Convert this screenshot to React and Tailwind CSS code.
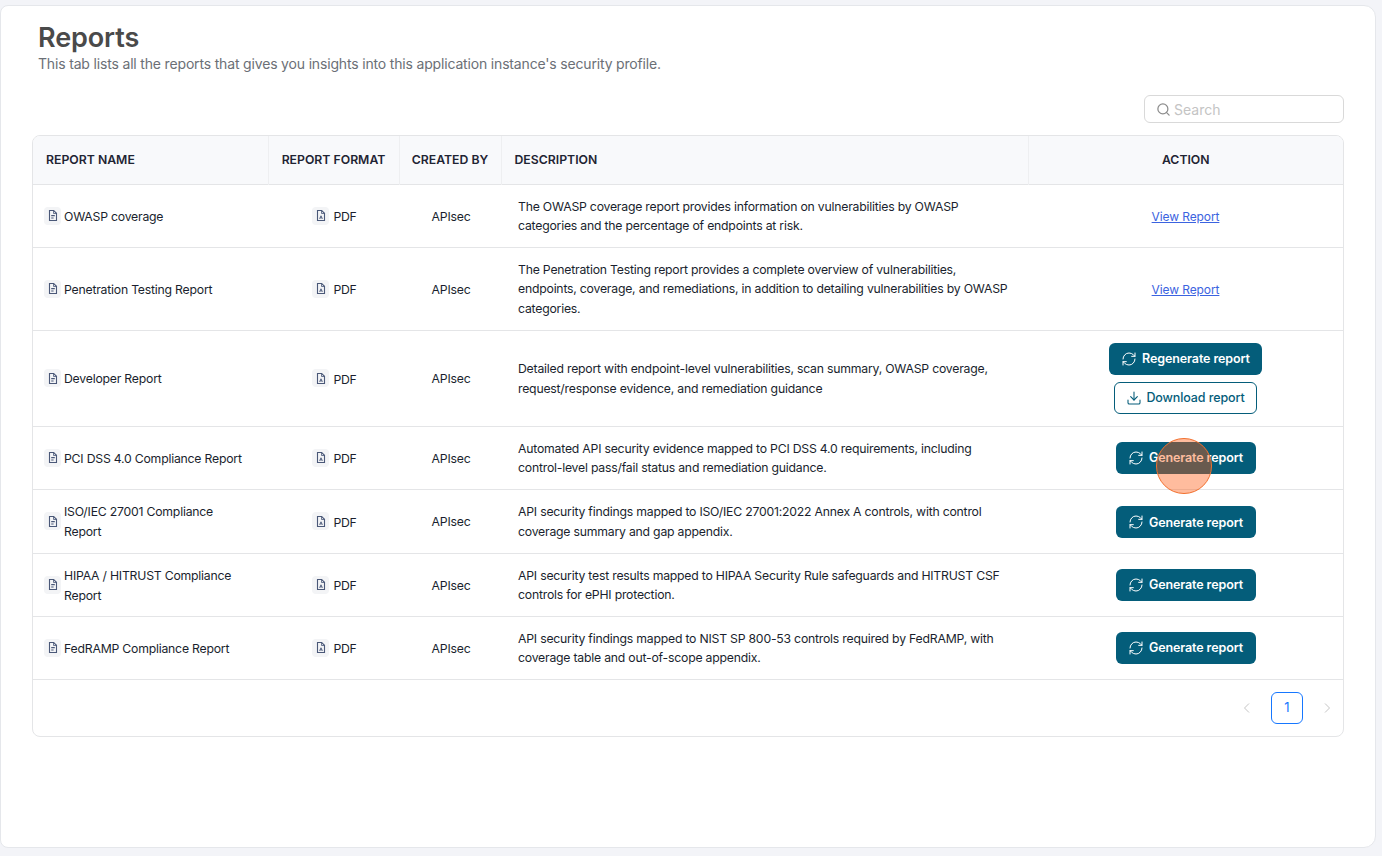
import { Search, RefreshCw, Download } from 'lucide-react';

const font = { fontFamily: 'Inter, sans-serif' };

const rows = [
    { name: 'OWASP coverage', h: 'h-[63px]', desc: ['The OWASP coverage report provides information on vulnerabilities by OWASP', 'categories and the percentage of endpoints at risk.'], action: 'view' },
    { name: 'Penetration Testing Report', h: 'h-[83px]', desc: ['The Penetration Testing report provides a complete overview of vulnerabilities,', 'endpoints, coverage, and remediations, in addition to detailing vulnerabilities by OWASP', 'categories.'], action: 'view' },
    { name: 'Developer Report', h: 'h-[96px]', desc: ['Detailed report with endpoint-level vulnerabilities, scan summary, OWASP coverage,', 'request/response evidence, and remediation guidance'], action: 'regen' },
    { name: 'PCI DSS 4.0 Compliance Report', h: 'h-[63px]', desc: ['Automated API security evidence mapped to PCI DSS 4.0 requirements, including', 'control-level pass/fail status and remediation guidance.'], action: 'gen' },
    { name: ['ISO/IEC 27001 Compliance', 'Report'], h: 'h-[64px]', pad: 'pt-[2px]', desc: ['API security findings mapped to ISO/IEC 27001:2022 Annex A controls, with control', 'coverage summary and gap appendix.'], action: 'gen' },
    { name: ['HIPAA / HITRUST Compliance', 'Report'], h: 'h-[63px]', desc: ['API security test results mapped to HIPAA Security Rule safeguards and HITRUST CSF', 'controls for ePHI protection.'], action: 'gen' },
    { name: 'FedRAMP Compliance Report', h: 'h-[63px]', desc: ['API security findings mapped to NIST SP 800-53 controls required by FedRAMP, with', 'coverage table and out-of-scope appendix.'], action: 'gen' },
];

const FileIcon = ({ pdf }) => (
    <span className="flex h-[18px] w-[17px] shrink-0 items-center justify-center rounded bg-[#f3f4f6]">
        <svg width="12" height="13" viewBox="0 0 12 13" fill="none" stroke="#4a5878" strokeWidth="1.1">
            <path d="M2.5 1.5h4.2L9.5 4.3v7.2h-7z" />
            <path d="M6.5 1.5v3h3" strokeWidth="0.8" />
            {pdf ? <path d="M4.6 9.8l1.4-3 1.4 3M5 8.9h2" strokeWidth="0.9" /> : <path d="M4.2 6.6h3.6M4.2 9h2.4" />}
        </svg>
    </span>
);

const Chevron = ({ d }) => (
    <svg width="8" height="10" viewBox="0 0 8 10" fill="none" stroke="#c4c4c4" strokeWidth="1">
        <path d={d} />
    </svg>
);

const Action = ({ type }) => {
    if (type === 'view') {
        return <a href="#" className="inline-block pt-[3px] text-[12px] tracking-[-0.1px] text-[#3b63e0] underline">View Report</a>;
    }
    if (type === 'gen') {
        return (
            <button className="mx-auto flex h-8 w-[140px] items-center justify-center gap-[5px] rounded-md bg-[#045d7a] text-[12.5px] font-semibold tracking-[-0.1px] text-white">
                <RefreshCw size={16} strokeWidth={1.5} />
                <span className="pt-[2px]">Generate report</span>
            </button>
        );
    }
    return (
        <div className="flex flex-col items-center gap-[7px]">
            <button className="flex h-8 w-[153px] items-center justify-center gap-[5px] rounded-md bg-[#045d7a] text-[12.5px] font-semibold tracking-[-0.1px] text-white">
                <RefreshCw size={16} strokeWidth={1.5} />
                <span className="pt-[2px]">Regenerate report</span>
            </button>
            <button className="flex h-8 w-[143px] items-center justify-center gap-1 rounded-md border border-[#045d7a] bg-white text-[12.5px] font-medium tracking-[-0.1px] text-[#045d7a]">
                <Download size={16} strokeWidth={1.6} />
                <span className="pt-[2px]">Download report</span>
            </button>
        </div>
    );
};

const App = () => {
    return (
        <div className="h-[856px] overflow-hidden bg-[#f3f4f8] pt-[5px] pr-[6px]" style={font}>
            <div className="relative h-[843px] rounded-l-lg rounded-r-xl border border-[#e5e7eb] bg-white pt-[19px] pr-[31px] pl-[31px]">
                <h1 className="pl-[6px] text-[27px] leading-[25px] font-semibold tracking-[-0.1px] text-[#4a4a4a]">Reports</h1>
                <p className="mt-[4px] pl-[6px] text-[14px] leading-[20px] tracking-[-0.17px] text-[#6b6f76]">
                    This tab lists all the reports that gives you insights into this application instance's security profile.
                </p>

                <div className="mt-[21px] flex justify-end">
                    <div className="flex h-7 w-[200px] items-center gap-[3px] rounded-md border border-[#d9d9d9] px-[11px] text-[14px] text-[#c4c4c4]">
                        <Search size={15} className="text-[#8c8c8c]" />
                        Search
                    </div>
                </div>

                <div className="mt-3 overflow-hidden rounded-lg border border-[#e4e5e7]">
                    <table className="w-full table-fixed border-collapse text-[12.25px] tracking-[-0.22px] text-[#1a1f2e]">
                        <thead>
                            <tr className="h-[48px] border-b border-[#e4e5e7] bg-[#f8f9fb] text-[12.25px] tracking-normal text-[#1f2433]">
                                <th className="w-[235px] border-r border-[#eeeff1] pl-[13px] text-left font-semibold">REPORT NAME</th>
                                <th className="w-[131px] border-r border-[#eeeff1] text-center font-semibold">REPORT FORMAT</th>
                                <th className="w-[102px] border-r border-[#eeeff1] text-center font-semibold">CREATED BY</th>
                                <th className="w-[527px] border-r border-[#eeeff1] pl-[13px] text-left font-semibold">DESCRIPTION</th>
                                <th className="text-center font-semibold">ACTION</th>
                            </tr>
                        </thead>
                        <tbody>
                            {rows.map((row, i) => (
                                <tr key={i} className={`${row.h} border-b border-[#e4e5e7]`}>
                                    <td className="pl-[11px]">
                                        <div className="flex items-center gap-[3px] leading-[20px]">
                                            <FileIcon />
                                            <span className="pt-[2px]">
                                                {Array.isArray(row.name) ? row.name.map((n) => <span key={n} className="block">{n}</span>) : row.name}
                                            </span>
                                        </div>
                                    </td>
                                    <td className="pl-[2px]">
                                        <div className="flex items-center justify-center gap-1 leading-[20px]">
                                            <FileIcon pdf />
                                            <span className="pt-[3px]">PDF</span>
                                        </div>
                                    </td>
                                    <td className="pt-[3px] pl-[2px] text-center">APIsec</td>
                                    <td className="pt-[1px] pl-[17px] leading-[19.5px]">
                                        {row.desc.map((d) => <span key={d} className="block whitespace-nowrap">{d}</span>)}
                                    </td>
                                    <td className={`text-center ${row.pad || ''}`}>
                                        <Action type={row.action} />
                                    </td>
                                </tr>
                            ))}
                        </tbody>
                    </table>
                    <div className="flex h-[56px] items-center justify-end">
                        <Chevron d="M6 .5L1.5 5 6 9.5" />
                        <span className="mx-5 flex h-8 w-8 items-center justify-center rounded-md border border-[#1677ff] pt-px text-[13px] text-[#1677ff]">1</span>
                        <span className="mr-3">
                            <Chevron d="M2 .5L6.5 5 2 9.5" />
                        </span>
                    </div>
                </div>

                {/* click marker */}
                <div className="absolute top-[432px] left-[1155px] h-[56px] w-[56px] rounded-full border border-[#f2702e] bg-[#fe580c]/40"></div>
            </div>
        </div>
    );
};

export default App;
